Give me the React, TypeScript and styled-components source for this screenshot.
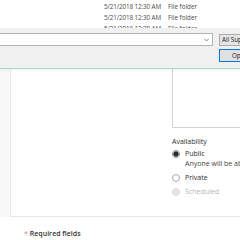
import { createGlobalStyle, styled } from 'styled-components';

const GlobalStyle = createGlobalStyle`
  html, body {
    margin: 0;
    background: #ffffff;
    overflow: hidden;
  }
  body {
    font-family: "Open Sans", "Noto Sans", sans-serif;
    color: #333;
  }
`;

const Screen = styled.div`
  position: relative;
  width: 240px;
  height: 240px;
  overflow: hidden;
`;

/* Windows file dialog lying over the page */
const Dialog = styled.div`
  position: absolute;
  top: 0;
  left: 0;
  width: 300px;
  height: 68px;
  background: #f0f0f0;
  border-bottom: 1px solid #a9dbc3;
  box-shadow: 0 1px 2px rgba(0, 0, 0, 0.06);
  z-index: 2;
  font-size: 6.3px;
`;

const FileList = styled.div`
  height: 28px;
  background: #ffffff;
  overflow: hidden;
  padding-top: 1px;
  box-sizing: border-box;
`;

const FileRow = styled.div`
  display: grid;
  grid-template-columns: 104px 64px 1fr;
  height: 11px;
  line-height: 11px;
  color: #4a4a4a;
  white-space: nowrap;
`;

const DateCell = styled.span`
  letter-spacing: -0.1px;
`;

const DialogFooter = styled.div`
  display: grid;
  grid-template-columns: 213px 1fr;
  grid-template-rows: 13px 13px;
  column-gap: 6px;
  row-gap: 3px;
  padding-top: 5px;
`;

const NameInput = styled.div`
  position: relative;
  background: #ffffff;
  border: 1px solid #b4b4b4;
  border-left: none;
  box-sizing: border-box;

  svg {
    position: absolute;
    right: 3px;
    top: 4px;
  }
`;

const TypeSelect = styled.div`
  margin-top: 1px;
  background: #e5e5e5;
  border: 1px solid #acacac;
  box-sizing: border-box;
  padding-left: 2px;
  line-height: 10px;
  color: #222;
  white-space: nowrap;
  overflow: hidden;
`;

const OpenButton = styled.div`
  grid-column: 2;
  width: 42px;
  background: #e1e1e1;
  border: 1px solid #0078d7;
  box-sizing: border-box;
  text-align: center;
  line-height: 11px;
  color: #222;
`;

/* Page underneath */
const Body = styled.div`
  display: flex;
  height: 217px;
`;

const Gutter = styled.div`
  flex: none;
  width: 10px;
  background: #f8f8f8;
  border-right: 1px solid #e9e9e9;
`;

const Content = styled.div`
  flex: 1;
  min-width: 0;
  display: grid;
  grid-template-columns: 161px minmax(0, 1fr);
  border-bottom: 1px solid #e6e6e6;
  font-size: 7px;
`;

const Side = styled.div`
  padding-top: 40px;
`;

const TextArea = styled.div`
  width: 120px;
  height: 88px;
  border: 1px solid #d4d4d4;
  box-sizing: border-box;
  background: #fff;
`;

const Label = styled.div`
  margin-top: 9px;
  line-height: 10px;
  color: #2e2e2e;
`;

const RadioList = styled.div`
  display: flex;
  flex-direction: column;
  gap: 4px;
  margin-top: 2px;
`;

const Option = styled.div<{ $disabled?: boolean }>`
  display: grid;
  grid-template-columns: 13px 1fr;
  line-height: 10px;
  color: ${(p) => (p.$disabled ? '#b5b5b5' : '#2e2e2e')};
  white-space: nowrap;
`;

const Radio = styled.span<{ $checked?: boolean; $disabled?: boolean }>`
  width: 8px;
  height: 8px;
  margin-top: 1px;
  border-radius: 50%;
  box-sizing: border-box;
  border: 1px solid ${(p) => (p.$disabled ? '#dedede' : p.$checked ? '#8a8a8a' : '#a9a9a9')};
  background: ${(p) => (p.$checked ? 'radial-gradient(circle, #2b2b2b 0 2.4px, #e6e6e6 2.8px)' : p.$disabled ? '#e4e4e4' : '#fff')};
`;

const Hint = styled.div`
  grid-column: 2;
  color: #444;
`;

const Footer = styled.div`
  padding: 12px 0 0 24px;
  font-size: 7px;
  font-weight: 600;
  line-height: 10px;
  color: #333;
`;

const Star = styled.span`
  color: #d98a8a;
  margin-right: 2px;
  font-weight: 400;
`;

const files = [
  { date: '5/21/2018 12:30 AM', type: 'File folder' },
  { date: '5/21/2018 12:30 AM', type: 'File folder' },
  { date: '5/21/2018 12:30 AM', type: 'File folder' },
];

function App() {
  return (
    <Screen>
      <GlobalStyle />
      <Dialog>
        <FileList>
          {files.map((f, i) => (
            <FileRow key={i}>
              <span />
              <DateCell>{f.date}</DateCell>
              <span>{f.type}</span>
            </FileRow>
          ))}
        </FileList>
        <DialogFooter>
          <NameInput>
            <svg width="5" height="4" viewBox="0 0 5 4">
              <path d="M0.5 1 L2.5 3 L4.5 1" fill="none" stroke="#666" strokeWidth="0.8" />
            </svg>
          </NameInput>
          <TypeSelect>All Supported Types</TypeSelect>
          <OpenButton>Open</OpenButton>
        </DialogFooter>
      </Dialog>
      <Body>
        <Gutter />
        <Content>
          <div />
          <Side>
            <TextArea />
            <Label>Availability</Label>
            <RadioList>
              <Option>
                <Radio $checked />
                <span>Public</span>
                <Hint>Anyone will be able to see this</Hint>
              </Option>
              <Option>
                <Radio />
                <span>Private</span>
              </Option>
              <Option $disabled>
                <Radio $disabled />
                <span>Scheduled</span>
              </Option>
            </RadioList>
          </Side>
        </Content>
      </Body>
      <Footer>
        <Star>*</Star>
        Required fields
      </Footer>
    </Screen>
  );
}

export default App;
